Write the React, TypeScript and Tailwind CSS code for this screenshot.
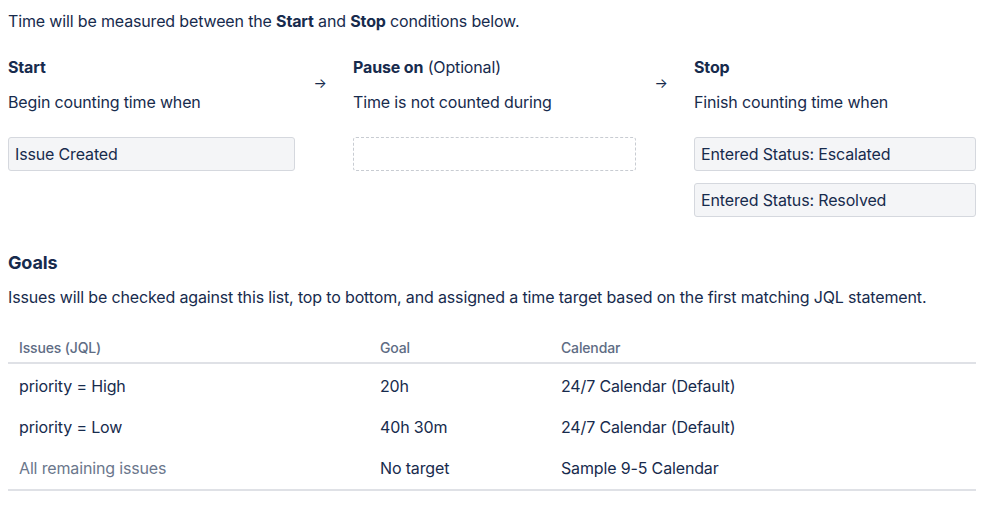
const rows = [
  { jql: "priority = High", goal: "20h", calendar: "24/7 Calendar (Default)", muted: false, cls: "h-[43px] [&>td]:pt-[2px]" },
  { jql: "priority = Low", goal: "40h 30m", calendar: "24/7 Calendar (Default)", muted: false, cls: "h-[41px]" },
  { jql: "All remaining issues", goal: "No target", calendar: "Sample 9-5 Calendar", muted: true, cls: "h-[43px]" },
];

function Condition({ label }: { label: string }) {
  return (
    <div className="flex h-[34px] items-center rounded-[3px] border border-[#d5d8de] bg-[#f4f5f7] px-[6px] text-[16px]">
      {label}
    </div>
  );
}

function Arrow() {
  return (
    <div className="flex w-[58px] shrink-0 justify-center pt-[16px] pr-[8px] text-[14px]">→</div>
  );
}

export default function App() {
  return (
    <div
      className="min-h-[514px] bg-white px-[8px] pt-[10px] text-[16px] tracking-[-0.15px] text-[#172b4d]"
      style={{ fontFamily: "Inter, 'Noto Sans', sans-serif" }}
    >
      <p className="leading-[22px]">
        Time will be measured between the <b>Start</b> and <b>Stop</b> conditions below.
      </p>

      <div className="mt-[24px] flex w-[968px]">
        <div className="w-[287px] shrink-0">
          <h3 className="leading-[22px] font-bold">Start</h3>
          <p className="mt-[13px] leading-[22px]">Begin counting time when</p>
          <div className="mt-[24px]">
            <Condition label="Issue Created" />
          </div>
        </div>
        <Arrow />
        <div className="w-[283px] shrink-0">
          <h3 className="leading-[22px]">
            <b>Pause on</b> (Optional)
          </h3>
          <p className="mt-[13px] leading-[22px]">Time is not counted during</p>
          <div className="mt-[24px] h-[34px] rounded-[3px] border border-dashed border-[#c8ccd2]" />
        </div>
        <Arrow />
        <div className="flex-1">
          <h3 className="leading-[22px] font-bold">Stop</h3>
          <p className="mt-[13px] leading-[22px]">Finish counting time when</p>
          <div className="mt-[24px] flex flex-col gap-[12px]">
            <Condition label="Entered Status: Escalated" />
            <Condition label="Entered Status: Resolved" />
          </div>
        </div>
      </div>

      <h2 className="mt-[34px] text-[18px] leading-[24px] font-bold">Goals</h2>
      <p className="mt-[11px] leading-[22px]">
        Issues will be checked against this list, top to bottom, and assigned a time target based on the first matching JQL statement.
      </p>

      <table className="mt-[29px] w-[968px] border-collapse">
        <thead>
          <tr className="border-b-2 border-[#dfe1e6] text-left text-[14px] text-[#5e6c84]">
            <th className="w-[361px] px-[11px] pb-[4px] font-medium">Issues (JQL)</th>
            <th className="w-[181px] px-[11px] pb-[4px] font-medium">Goal</th>
            <th className="px-[11px] pb-[4px] font-medium">Calendar</th>
          </tr>
        </thead>
        <tbody className="border-b-2 border-[#dfe1e6]">
          {rows.map((r) => (
            <tr key={r.jql} className={r.cls}>
              <td className={`px-[11px] ${r.muted ? "text-[#6b778c]" : ""}`}>{r.jql}</td>
              <td className="px-[11px]">{r.goal}</td>
              <td className="px-[11px]">{r.calendar}</td>
            </tr>
          ))}
        </tbody>
      </table>
    </div>
  );
}
